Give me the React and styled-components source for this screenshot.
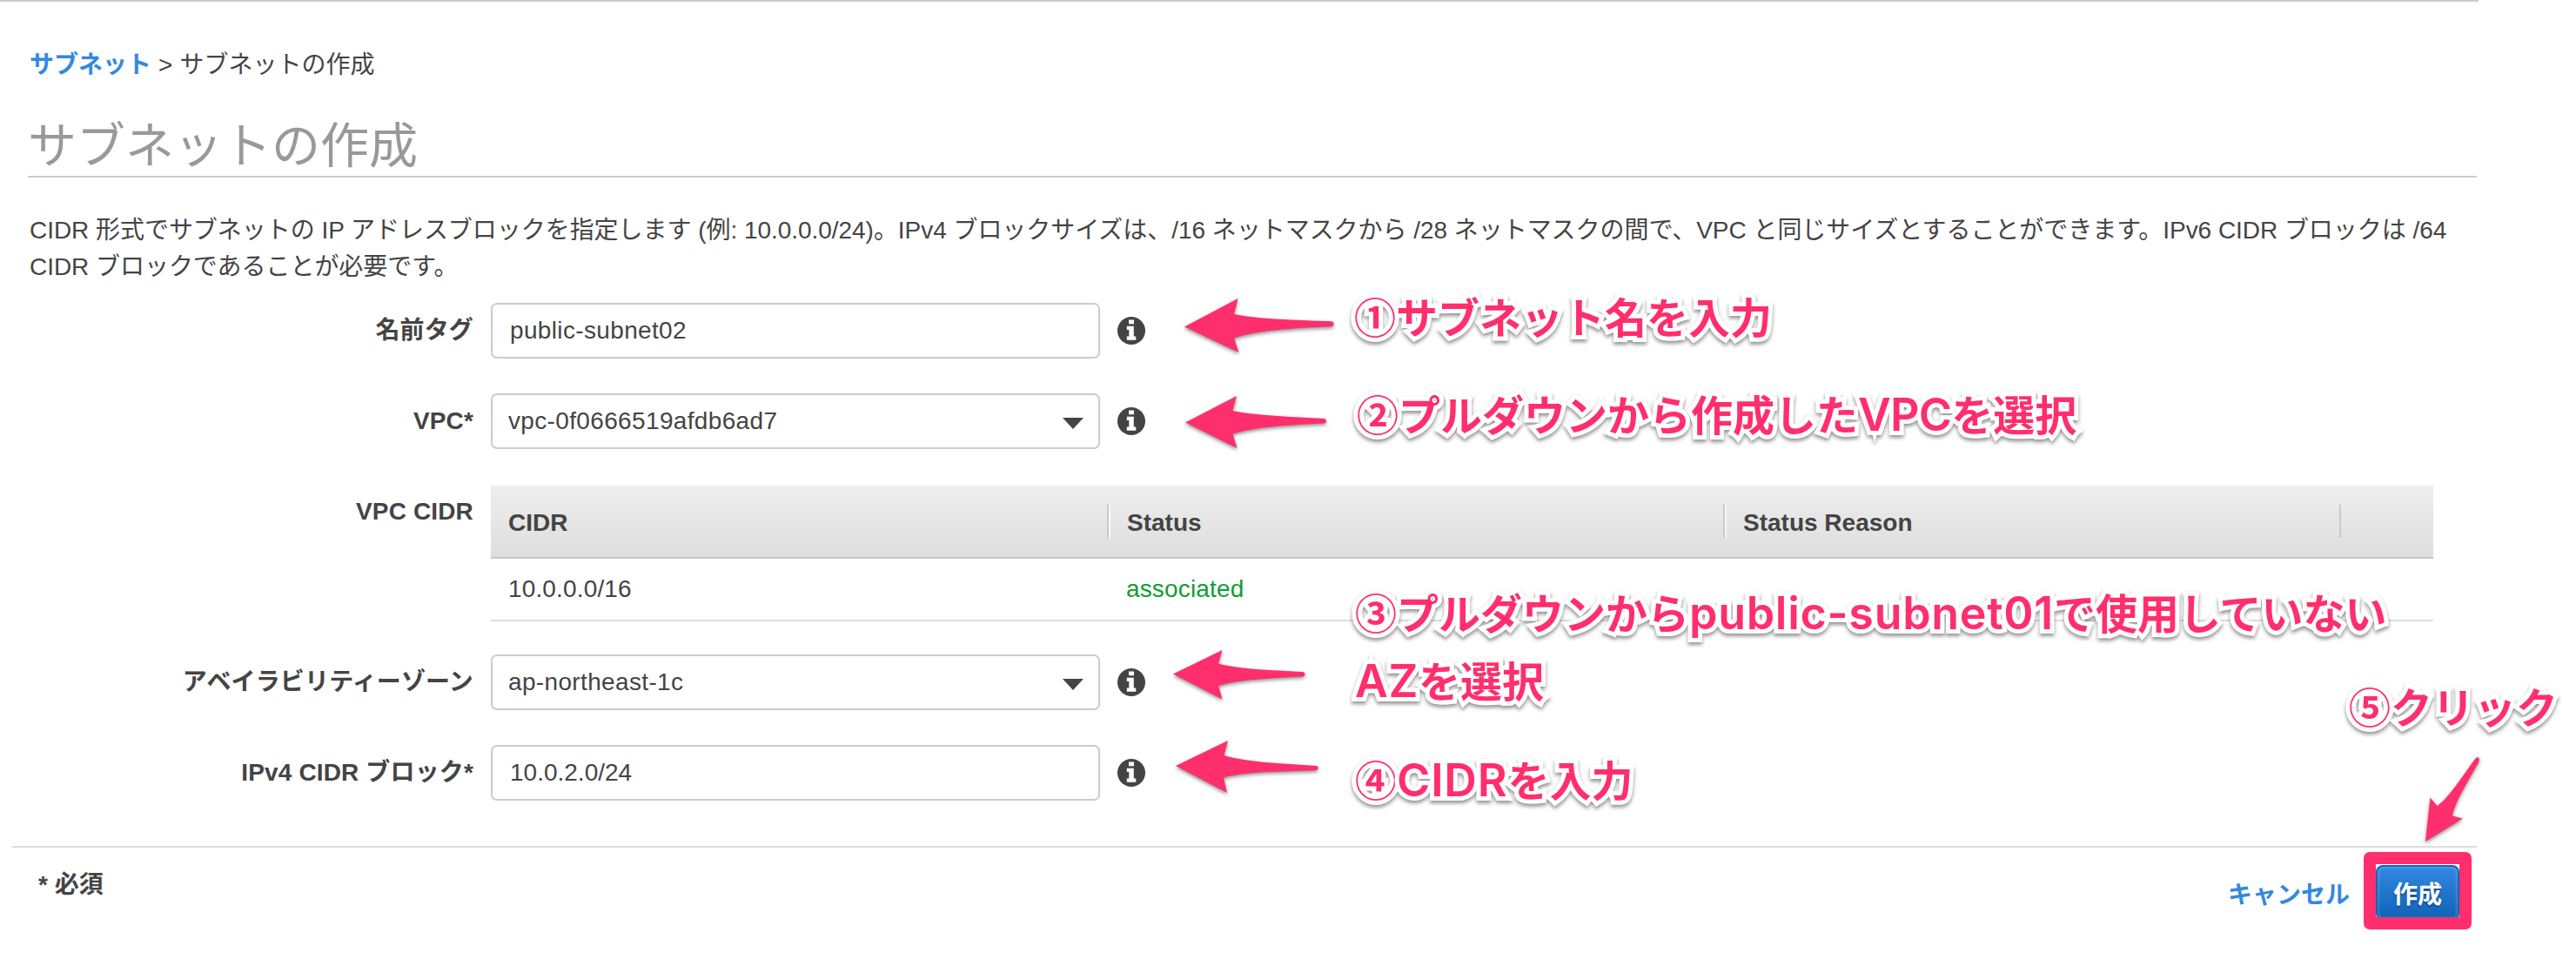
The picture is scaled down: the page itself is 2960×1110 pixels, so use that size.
import React from "react";
import styled, { createGlobalStyle } from "styled-components";

const PINK = "#ff2e6c";
const INK = "#444";
const LINK = "#3389e0";

const GlobalStyle = createGlobalStyle`
  * { box-sizing: border-box; }
  body {
    margin: 0;
    background: #fff;
    color: ${INK};
    font-family: "Liberation Sans", "Noto Sans CJK JP", sans-serif;
    font-size: 28px;
    line-height: 42px;
  }
`;

const Page = styled.div`
  position: relative;
  width: 2960px;
  height: 1110px;
  overflow: hidden;
`;

const Console = styled.main`
  width: 2848px;
  border-top: 2px solid #ccc;
  padding-right: 2px;
`;

const Breadcrumb = styled.nav`
  display: flex;
  gap: 8px;
  padding: 52px 0 0 34px;
`;

const Crumb = styled.a`
  color: ${LINK};
  font-weight: 700;
`;

const Title = styled.h1`
  margin: 30px 0 0 32px;
  height: 78px;
  border-bottom: 2px solid #ccc;
  color: #999;
  font-size: 56px;
  font-weight: 400;
  line-height: 84px;
`;

const Lead = styled.p`
  margin: 40px 0 0 34px;
  letter-spacing: -0.04px;
  white-space: nowrap;
`;

const Form = styled.form`
  display: flex;
  flex-direction: column;
  gap: 40px;
  padding-top: 20px;
`;

const Row = styled.div`
  display: grid;
  grid-template-columns: 544px auto 1fr;
  column-gap: 20px;
  align-items: start;
`;

const Label = styled.label`
  padding-top: 11px;
  text-align: right;
  font-weight: 700;
  letter-spacing: 0.15px;
`;

const Field = styled.div`
  display: flex;
  align-items: center;
  justify-content: space-between;
  width: 700px;
  height: 64px;
  padding: 0 17px 0 ${(p) => (p.$select ? 18 : 20)}px;
  border: 2px solid #ccc;
  border-radius: 7px;
`;

const Value = styled.span`
  letter-spacing: ${(p) => (p.$numeric ? 0 : 0.35)}px;
`;

const Caret = styled.i`
  margin-top: 4px;
  border: solid transparent;
  border-width: 13px 12px 0;
  border-top-color: ${INK};
`;

const InfoSvg = styled.svg`
  display: block;
  width: 32px;
  height: 32px;
  margin-top: 16px;
`;

const Table = styled.div`
  width: 2232px;
  margin: 2px 0 -2px;
`;

const TableRow = styled.div`
  display: grid;
  grid-template-columns: repeat(3, 708px) 108px;
  align-items: center;
`;

const HeadRow = styled(TableRow)`
  height: 84px;
  border-bottom: 2px solid #c9c9c9;
  background: linear-gradient(#eee, #dedede);
  font-weight: 700;
`;

const HeadCell = styled.div`
  height: 38px;
  margin-top: -1px;
  padding-left: ${(p) => (p.$first ? 20 : 21)}px;
  border-left: ${(p) => (p.$first ? "0" : "2px solid #c9c9c9")};
  box-shadow: ${(p) => (p.$first || p.$last ? "none" : "inset 2px 0 #f8f8f8")};
  line-height: 41px;
`;

const BodyRow = styled(TableRow)`
  height: 72px;
  border-bottom: 2px solid #ddd;
`;

const BodyCell = styled.div`
  padding-left: ${(p) => (p.$status ? 22 : 20)}px;
  color: ${(p) => (p.$status ? "#0f9d34" : INK)};
  letter-spacing: 0.15px;
`;

const Footer = styled.footer`
  display: flex;
  justify-content: space-between;
  margin: 52px 0 0 14px;
  padding: 20px 20px 0 30px;
  border-top: 2px solid #ddd;
`;

const Required = styled.span`
  padding-top: 2px;
  font-weight: 700;
`;

const Actions = styled.div`
  display: flex;
  gap: 30px;
`;

const Cancel = styled.a`
  padding-top: 14px;
  color: ${LINK};
  font-weight: 700;
`;

const Submit = styled.button`
  width: 96px;
  height: 64px;
  padding: 5px 0 0;
  border: 2px solid #1166bb;
  border-radius: 8px;
  background: linear-gradient(#3289e2, #1166bb 92%);
  box-shadow: inset 0 0 4px rgba(255, 255, 255, 0.35);
  color: #fff;
  font: inherit;
  font-weight: 700;
  text-shadow: 0 2px 2px #104a8c;
  white-space: nowrap;
`;

/* Annotation layer */
const Highlight = styled.div`
  position: absolute;
  left: 2716px;
  top: 979px;
  width: 124px;
  height: 89px;
  border: 14px solid ${PINK};
  border-radius: 7px;
`;

const Note = styled.div`
  position: absolute;
  left: ${(p) => p.$x}px;
  top: ${(p) => p.$y}px;
  color: ${PINK};
  font-family: "Noto Sans CJK JP", sans-serif;
  font-size: 48px;
  font-weight: 700;
  line-height: 78px;
  white-space: nowrap;
  -webkit-text-stroke: 10px #fff;
  paint-order: stroke fill;
  filter: drop-shadow(0 3px 2px rgba(0, 0, 0, 0.42));
`;

const Latin = styled.span`
  font-family: Inter, sans-serif;
  font-size: 52px;
  font-weight: 600;
  line-height: 0;
  letter-spacing: ${(p) => p.$track || 0}px;
`;

const ArrowSvg = styled.svg`
  position: absolute;
  left: ${(p) => p.$x}px;
  top: ${(p) => p.$y}px;
  overflow: visible;
  fill: ${PINK};
  filter: drop-shadow(0 2px 2px rgba(0, 0, 0, 0.45));
`;

const ARROWS = [
  { x: 1361, y: 343, w: 172, h: 62, d: "M0 32.5L61.500 0L57 18C85 24 125 24.500 169.500 26.300Q172 27 171.500 29.500Q171.500 32 169 32.300C125 34 82 37 57 45.500L62.500 62Z" },
  { x: 1362, y: 455, w: 162, h: 60, d: "M0 30.500L59 0L54.500 17C82 22.500 120 24 159.500 26Q162 26.500 162 29Q162 31 159.500 31.500C120 33 78 36 54.500 43.500L59.500 60Z" },
  { x: 1348, y: 747, w: 152, h: 56, d: "M0 27.500L56.500 0L52 15.500C76 22 112 23 149 25Q151.500 25.500 151.500 28Q151.500 30 149 30.500C112 32 76 34 52 41L56.500 56.500Z" },
  { x: 1351, y: 851, w: 164, h: 60, d: "M0 29L60 0L55.500 17C82 25 120 26 161.500 29Q164 29.500 163.500 32Q163.500 34 161 34.300C120 35.500 78 36 55 42.500L59 60Z" },
  { x: 2787, y: 870, w: 62, h: 97, d: "M0 97L5.500 46.500L13.500 56C26 48 41 24 57.500 1.500Q59.500 -.5 61.500 1Q62.300 2.500 61.500 5C50 26 34 51 31 67.500L43 70.500Z" },
];

function Arrow({ x, y, w, h, d }) {
  return (
    <ArrowSvg $x={x} $y={y} width={w} height={h} viewBox={`0 0 ${w} ${h}`}>
      <path d={d} />
    </ArrowSvg>
  );
}

function InfoIcon() {
  return (
    <InfoSvg viewBox="0 0 32 32">
      <circle cx="16" cy="16" r="16" fill={INK} />
      <path fill="#fff" d="M13 3.500h6v4.800h-6zM10.800 10.700h8v11.800h2.500v4.300H10.800v-4.300h2.500v-7.600h-2.500z" />
    </InfoSvg>
  );
}

function FormField({ label, value, select, numeric }) {
  return (
    <Row>
      <Label>{label}</Label>
      <Field $select={select}>
        <Value $numeric={numeric}>{value}</Value>
        {select && <Caret />}
      </Field>
      <InfoIcon />
    </Row>
  );
}

export default function App() {
  return (
    <Page>
      <GlobalStyle />
      <Console>
        <Breadcrumb>
          <Crumb>サブネット</Crumb>
          <span>&gt;</span>
          <span>サブネットの作成</span>
        </Breadcrumb>
        <Title>サブネットの作成</Title>
        <Lead>
          CIDR 形式でサブネットの IP アドレスブロックを指定します (例: 10.0.0.0/24)。IPv4 ブロックサイズは、/16 ネットマスクから /28 ネットマスクの間で、VPC と同じサイズとすることができます。IPv6 CIDR ブロックは /64
          <br />
          CIDR ブロックであることが必要です。
        </Lead>
        <Form>
          <FormField label="名前タグ" value="public-subnet02" />
          <FormField label="VPC*" value="vpc-0f0666519afdb6ad7" select />
          <Row>
            <Label>VPC CIDR</Label>
            <Table>
              <HeadRow>
                <HeadCell $first>CIDR</HeadCell>
                <HeadCell>Status</HeadCell>
                <HeadCell>Status Reason</HeadCell>
                <HeadCell $last />
              </HeadRow>
              <BodyRow>
                <BodyCell>10.0.0.0/16</BodyCell>
                <BodyCell $status>associated</BodyCell>
              </BodyRow>
            </Table>
          </Row>
          <FormField label="アベイラビリティーゾーン" value="ap-northeast-1c" select />
          <FormField label="IPv4 CIDR ブロック*" value="10.0.2.0/24" numeric />
        </Form>
        <Footer>
          <Required>* 必須</Required>
          <Actions>
            <Cancel>キャンセル</Cancel>
            <Submit type="button">作成</Submit>
          </Actions>
        </Footer>
      </Console>

      {ARROWS.map((a) => (
        <Arrow key={a.y} {...a} />
      ))}
      <Note $x={1556} $y={323}>①サブネット名を入力</Note>
      <Note $x={1559} $y={435}>
        ②プルダウンから作成した<Latin $track={-0.8}>VPC</Latin>を選択
      </Note>
      <Note $x={1557} $y={663}>
        ③プルダウンから<Latin $track={0.7}>public-subnet01</Latin>で使用していない
        <br />
        <Latin $track={0.6}>AZ</Latin>を選択
      </Note>
      <Note $x={1557} $y={855}>
        ④<Latin $track={0.8}>CIDR</Latin>を入力
      </Note>
      <Note $x={2699} $y={771}>⑤クリック</Note>
      <Highlight />
    </Page>
  );
}
